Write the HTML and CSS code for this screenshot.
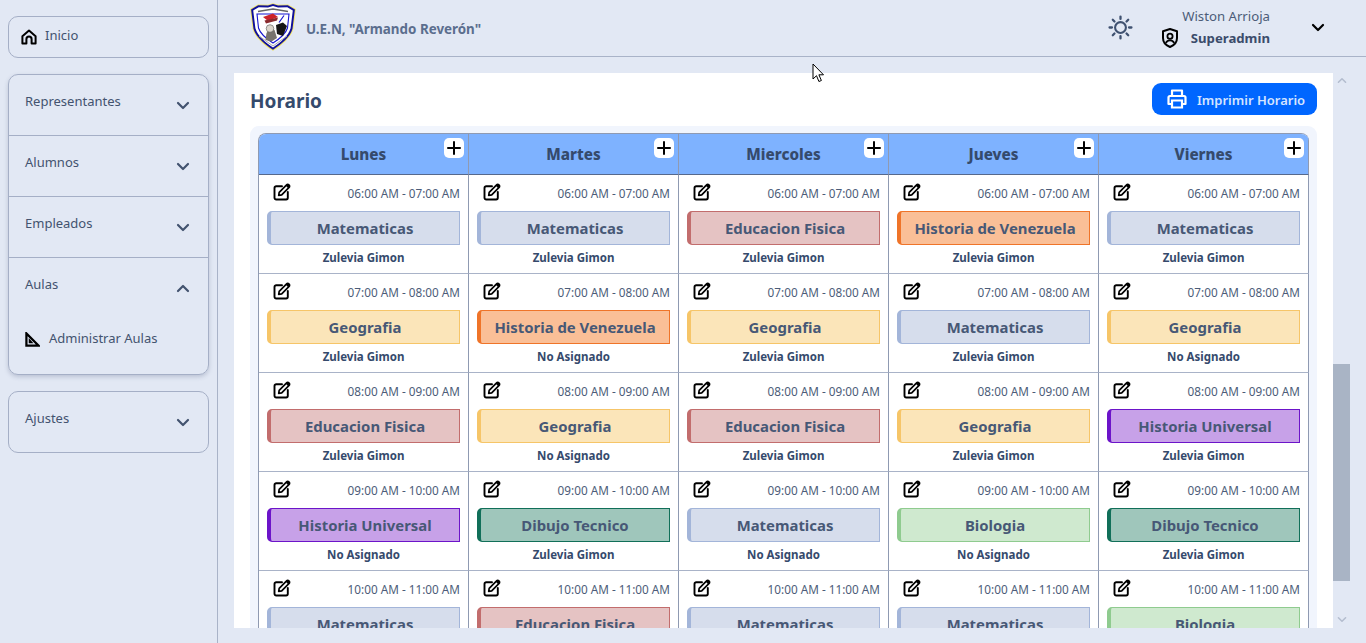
FILE: index.html
```html
<!DOCTYPE html>
<html lang="es">
<head>
<meta charset="utf-8">
<title>Horario</title>
<link rel="stylesheet" href="styles.css">
</head>
<body>
<svg class="defs" width="0" height="0" aria-hidden="true">
  <symbol id="edit" viewBox="0 0 18 18"><path d="M9 3.200H3.200A1.700 1.700 0 0 0 1.500 4.900v9.900a1.700 1.700 0 0 0 1.700 1.700h9.900a1.700 1.700 0 0 0 1.700-1.700V9" fill="none" stroke="#000" stroke-width="1.900" stroke-linecap="round"/><path d="M6.200 9.300 13.600 1.900a1.500 1.500 0 0 1 2.200 0l.3.3a1.500 1.500 0 0 1 0 2.200L8.700 11.800l-3 .5z" fill="none" stroke="#000" stroke-width="1.700" stroke-linejoin="round"/><path d="M12.800 2.800 15.200 5.200 16.400 4a1.600 1.600 0 0 0-2.300-2.300z" fill="#000"/></symbol>
  <symbol id="plus" viewBox="0 0 20 20"><path d="M10 4v12M4 10h12" stroke="#000" stroke-width="2" stroke-linecap="round" fill="none"/></symbol>
  <symbol id="chev" viewBox="0 0 14 9"><path d="M2 2l5 5 5-5" fill="none" stroke="currentColor" stroke-width="2.200" stroke-linecap="round" stroke-linejoin="round"/></symbol>
</svg>
<div class="app">
  <aside class="side">
    <a class="card home"><svg class="ic-home" viewBox="0 0 16 16"><path d="M1.400 7.200 8 1.600l6.600 5.600V14.600H10.600V10.200a2.600 2.600 0 0 0-5.200 0v4.400H1.400z" fill="none" stroke="#000" stroke-width="2" stroke-linejoin="round"/></svg><span>Inicio</span></a>
    <div class="card group lifted">
      <div class="acc"><span>Representantes</span><svg class="chev"><use href="#chev"/></svg></div>
      <div class="acc"><span>Alumnos</span><svg class="chev"><use href="#chev"/></svg></div>
      <div class="acc"><span>Empleados</span><svg class="chev"><use href="#chev"/></svg></div>
      <div class="acc open"><span>Aulas</span><svg class="chev up"><use href="#chev"/></svg></div>
      <div class="sub"><svg class="ic-sq" viewBox="0 0 16 16"><path d="M1.500 1.500v13h13z" fill="none" stroke="#000" stroke-width="2.400" stroke-linejoin="miter"/><path d="M4 6.500 9 12H4z" fill="#000"/></svg><span>Administrar Aulas</span></div>
    </div>
    <div class="card group solo"><div class="acc"><span>Ajustes</span><svg class="chev"><use href="#chev"/></svg></div></div>
  </aside>
  <div class="right">
    <header class="top">
      <svg class="logo" viewBox="0 0 46 48">
        <path d="M23 .2 28 1.800 38 1.500 45.800 6 43.300 26C41 34.500 32 42 23 47.800 14 42 5 34.500 2.700 26L.2 6 8 1.500 18 1.800z" fill="#f0e25c"/>
        <path d="M23 1 28 2.600 37.800 2.300 44.900 6.400 42.500 25.800C40.300 34 31.500 41.200 23 46.800 14.500 41.200 5.700 34 3.500 25.800L1.100 6.400 8.200 2.300 18 2.600z" fill="#10109c"/>
        <path d="M23 3 28 4.600 37.300 4.300 42.800 7.500 40.600 25.300C38.500 32.800 30.500 39.500 23 44.500 15.500 39.500 7.500 32.800 5.400 25.300L3.200 7.500 8.700 4.300 18 4.600z" fill="#fff"/>
        <path d="M8 8.500 23 6 38 8.500" fill="none" stroke="#666" stroke-width="1.400"/>
        <path d="M7 11 39 11 37.500 25C35.500 31.500 28.500 36.500 23 40 17.500 36.500 10.500 31.500 8.500 25z" fill="#fff" stroke="#1414d0" stroke-width="1.100"/>
        <path d="M13 14 23 10.500 28 14 18 18z" fill="#cc2229"/><path d="M14.500 17.500 28 14.500 27 17.500 16 20.500z" fill="#8a2a2d"/>
        <path d="M26 22 33 19.500 37 23 33 33 27 31z" fill="#161616"/>
        <path d="M15.500 37 16.500 30 20 25 24.500 27 27 35 21.500 38.500z" fill="#77736d"/><circle cx="20" cy="25.500" r="3.800" fill="#dcd6cc" stroke="#555" stroke-width=".6"/>
        <path d="M34 12.500 29 19.500" stroke="#1414d0" stroke-width="1.200"/>
        <path d="M9 33 23 43 37 33" fill="none" stroke="#aaa" stroke-width="1"/>
      </svg>
      <strong class="school">U.E.N, "Armando Reverón"</strong>
      <svg class="sun" viewBox="0 0 24 24"><circle cx="12" cy="12" r="5.200" fill="none" stroke="#3f5170" stroke-width="2"/><path d="M12 1.500v2.300M12 20.200v2.300M1.500 12h2.300M20.200 12h2.300M4.600 4.600l1.600 1.600M17.800 17.800l1.600 1.600M4.600 19.400l1.600-1.600M17.800 6.200l1.600-1.600" stroke="#3f5170" stroke-width="2.200" stroke-linecap="round"/></svg>
      <div class="user">
        <span class="uname">Wiston Arrioja</span>
        <div class="urole"><svg class="shield" viewBox="0 0 16 20"><path d="M8 1 15 3.200V10c0 4.500-3.200 7.500-7 9-3.800-1.500-7-4.500-7-9V3.200z" fill="none" stroke="#000" stroke-width="2" stroke-linejoin="round"/><circle cx="8" cy="8.200" r="2.600" fill="none" stroke="#000" stroke-width="1.800"/><path d="M3.800 15c1-2 2.600-2.600 4.200-2.600s3.200.6 4.200 2.600" fill="none" stroke="#000" stroke-width="1.800"/></svg><strong>Superadmin</strong></div>
      </div>
      <svg class="chev dark"><use href="#chev"/></svg>
    </header>
    <div class="body">
      <main class="panel">
        <div class="title-row">
          <h1>Horario</h1>
          <button class="print"><svg class="ic-print" viewBox="0 0 20 20"><path d="M5 7V1.500h10V7M5 15H1.500V8.500A1.500 1.500 0 0 1 3 7h14a1.500 1.500 0 0 1 1.500 1.500V15H15" fill="none" stroke="#fff" stroke-width="2.200" stroke-linejoin="round"/><path d="M5 11.500h10v7H5z" fill="none" stroke="#fff" stroke-width="2.200"/></svg><span>Imprimir Horario</span></button>
        </div>
        <div class="wrap">
          <div class="grid">
            <div class="th">Lunes<span class="add"><svg><use href="#plus"/></svg></span></div>
            <div class="th">Martes<span class="add"><svg><use href="#plus"/></svg></span></div>
            <div class="th">Miercoles<span class="add"><svg><use href="#plus"/></svg></span></div>
            <div class="th">Jueves<span class="add"><svg><use href="#plus"/></svg></span></div>
            <div class="th">Viernes<span class="add"><svg><use href="#plus"/></svg></span></div>

            <div class="td"><div class="tm"><svg class="ed"><use href="#edit"/></svg><span>06:00 AM - 07:00 AM</span></div><div class="sj mat">Matematicas</div><div class="tc">Zulevia Gimon</div></div>
            <div class="td"><div class="tm"><svg class="ed"><use href="#edit"/></svg><span>06:00 AM - 07:00 AM</span></div><div class="sj mat">Matematicas</div><div class="tc">Zulevia Gimon</div></div>
            <div class="td"><div class="tm"><svg class="ed"><use href="#edit"/></svg><span>06:00 AM - 07:00 AM</span></div><div class="sj edf">Educacion Fisica</div><div class="tc">Zulevia Gimon</div></div>
            <div class="td"><div class="tm"><svg class="ed"><use href="#edit"/></svg><span>06:00 AM - 07:00 AM</span></div><div class="sj hve">Historia de Venezuela</div><div class="tc">Zulevia Gimon</div></div>
            <div class="td"><div class="tm"><svg class="ed"><use href="#edit"/></svg><span>06:00 AM - 07:00 AM</span></div><div class="sj mat">Matematicas</div><div class="tc">Zulevia Gimon</div></div>

            <div class="td"><div class="tm"><svg class="ed"><use href="#edit"/></svg><span>07:00 AM - 08:00 AM</span></div><div class="sj geo">Geografia</div><div class="tc">Zulevia Gimon</div></div>
            <div class="td"><div class="tm"><svg class="ed"><use href="#edit"/></svg><span>07:00 AM - 08:00 AM</span></div><div class="sj hve">Historia de Venezuela</div><div class="tc">No Asignado</div></div>
            <div class="td"><div class="tm"><svg class="ed"><use href="#edit"/></svg><span>07:00 AM - 08:00 AM</span></div><div class="sj geo">Geografia</div><div class="tc">Zulevia Gimon</div></div>
            <div class="td"><div class="tm"><svg class="ed"><use href="#edit"/></svg><span>07:00 AM - 08:00 AM</span></div><div class="sj mat">Matematicas</div><div class="tc">Zulevia Gimon</div></div>
            <div class="td"><div class="tm"><svg class="ed"><use href="#edit"/></svg><span>07:00 AM - 08:00 AM</span></div><div class="sj geo">Geografia</div><div class="tc">No Asignado</div></div>

            <div class="td"><div class="tm"><svg class="ed"><use href="#edit"/></svg><span>08:00 AM - 09:00 AM</span></div><div class="sj edf">Educacion Fisica</div><div class="tc">Zulevia Gimon</div></div>
            <div class="td"><div class="tm"><svg class="ed"><use href="#edit"/></svg><span>08:00 AM - 09:00 AM</span></div><div class="sj geo">Geografia</div><div class="tc">No Asignado</div></div>
            <div class="td"><div class="tm"><svg class="ed"><use href="#edit"/></svg><span>08:00 AM - 09:00 AM</span></div><div class="sj edf">Educacion Fisica</div><div class="tc">Zulevia Gimon</div></div>
            <div class="td"><div class="tm"><svg class="ed"><use href="#edit"/></svg><span>08:00 AM - 09:00 AM</span></div><div class="sj geo">Geografia</div><div class="tc">Zulevia Gimon</div></div>
            <div class="td"><div class="tm"><svg class="ed"><use href="#edit"/></svg><span>08:00 AM - 09:00 AM</span></div><div class="sj hun">Historia Universal</div><div class="tc">Zulevia Gimon</div></div>

            <div class="td"><div class="tm"><svg class="ed"><use href="#edit"/></svg><span>09:00 AM - 10:00 AM</span></div><div class="sj hun">Historia Universal</div><div class="tc">No Asignado</div></div>
            <div class="td"><div class="tm"><svg class="ed"><use href="#edit"/></svg><span>09:00 AM - 10:00 AM</span></div><div class="sj dib">Dibujo Tecnico</div><div class="tc">Zulevia Gimon</div></div>
            <div class="td"><div class="tm"><svg class="ed"><use href="#edit"/></svg><span>09:00 AM - 10:00 AM</span></div><div class="sj mat">Matematicas</div><div class="tc">No Asignado</div></div>
            <div class="td"><div class="tm"><svg class="ed"><use href="#edit"/></svg><span>09:00 AM - 10:00 AM</span></div><div class="sj bio">Biologia</div><div class="tc">No Asignado</div></div>
            <div class="td"><div class="tm"><svg class="ed"><use href="#edit"/></svg><span>09:00 AM - 10:00 AM</span></div><div class="sj dib">Dibujo Tecnico</div><div class="tc">Zulevia Gimon</div></div>

            <div class="td"><div class="tm"><svg class="ed"><use href="#edit"/></svg><span>10:00 AM - 11:00 AM</span></div><div class="sj mat">Matematicas</div><div class="tc">Zulevia Gimon</div></div>
            <div class="td"><div class="tm"><svg class="ed"><use href="#edit"/></svg><span>10:00 AM - 11:00 AM</span></div><div class="sj edf">Educacion Fisica</div><div class="tc">Zulevia Gimon</div></div>
            <div class="td"><div class="tm"><svg class="ed"><use href="#edit"/></svg><span>10:00 AM - 11:00 AM</span></div><div class="sj mat">Matematicas</div><div class="tc">Zulevia Gimon</div></div>
            <div class="td"><div class="tm"><svg class="ed"><use href="#edit"/></svg><span>10:00 AM - 11:00 AM</span></div><div class="sj mat">Matematicas</div><div class="tc">Zulevia Gimon</div></div>
            <div class="td"><div class="tm"><svg class="ed"><use href="#edit"/></svg><span>10:00 AM - 11:00 AM</span></div><div class="sj bio">Biologia</div><div class="tc">Zulevia Gimon</div></div>
          </div>
        </div>
      </main>
      <div class="bar">
        <svg class="arrow"><use href="#chev"/></svg>
        <div class="thumb"></div>
        <svg class="arrow down"><use href="#chev"/></svg>
      </div>
    </div>
  </div>
</div>
<svg class="cursor" viewBox="0 0 13 20"><path d="M1 1v15l3.500-3.300 2.400 5.800 2.500-1-2.500-5.700H11.500z" fill="#fff" stroke="#000" stroke-width="1"/></svg>
</body>
</html>
```
FILE: styles.css
```css
* { box-sizing: border-box; }
html, body { margin: 0; height: 100%; overflow: hidden; }
body { font-family: "Noto Sans", "Open Sans", sans-serif; font-size: 13px; color: #43536f; background: #e2e8f4; }
.defs { position: absolute; }
.app { display: flex; height: 643px; }

.side { width: 218px; flex: none; border-right: 1px solid #a9b3c8; padding: 16px 8px 0; display: flex; flex-direction: column; gap: 16px; }
.card { width: 201px; border: 1px solid #a5afc6; border-radius: 10px; }
.home { height: 42px; display: flex; align-items: flex-start; gap: 8px; padding: 10px 0 0 12px; line-height: 17px; }
.ic-home { width: 16px; height: 16px; margin-top: 2px; flex: none; }
.group { display: flex; flex-direction: column; }
.lifted { box-shadow: 0 2px 4px rgba(70, 85, 120, .25); }
.acc { height: 61px; display: flex; justify-content: space-between; padding: 17px 18px 0 16px; line-height: 19px; border-bottom: 1px solid #a5afc6; }
.group > .acc:last-child { border-bottom: 0; }
.solo { height: 62px; }
.solo .acc { height: 60px; }
.open { border-bottom: 0; }
.chev { width: 14px; height: 9px; margin-top: 9px; color: #43536f; flex: none; }
.up { transform: rotate(180deg); }
.sub { height: 55px; display: flex; align-items: flex-start; gap: 9px; padding: 10px 0 0 16px; line-height: 18px; }
.ic-sq { width: 15px; height: 15px; margin-top: 3px; flex: none; }

.right { flex: 1; min-width: 0; display: flex; flex-direction: column; }
.top { height: 57px; flex: none; display: flex; align-items: center; padding: 0 41px 2px 32px; border-bottom: 1px solid #a9b3c8; }
.logo { width: 46px; height: 48px; flex: none; }
.school { margin-left: 10px; color: #5b6e8e; font-weight: 700; font-size: 13.400px; padding-top: 3px; }
.sun { width: 25px; height: 25px; margin-left: auto; flex: none; }
.user { width: 108px; margin-left: 29px; display: flex; flex-direction: column; align-items: flex-end; line-height: 20px; }
.uname { color: #4c5c78; font-size: 13.200px; }
.urole { display: flex; align-items: center; width: 108px; justify-content: space-between; margin-top: 2px; }
.urole strong { color: #3b4c6b; font-weight: 700; font-size: 13.200px; }
.shield { width: 16px; height: 20px; }
.chev.dark { color: #000; margin: 0 0 0 41px; }

.body { flex: 1; min-height: 0; display: flex; padding: 16px 16px 15px; }
.panel { width: 1099px; flex: none; background: #fff; overflow: hidden; padding: 10px 16px 0; }
.title-row { display: flex; justify-content: space-between; height: 43px; }
h1 { margin: 0; font-size: 19px; line-height: 36px; font-weight: 700; color: #354a6c; }
.print { width: 165px; height: 32px; border: 0; border-radius: 9px; background: #0066ff; color: #d5e4ff; font: 600 13px "Noto Sans", sans-serif; display: flex; align-items: center; gap: 10px; padding: 2px 0 0 15px; }
.ic-print { width: 20px; height: 20px; flex: none; margin-top: -2px; }

.wrap { background: #f1f5fd; border-radius: 9px; padding: 7px 8px 0; }
.grid { display: grid; grid-template-columns: repeat(5, 210px); border-left: 1px solid #8f9ab2; border-top: 1px solid #8f9ab2; border-top-left-radius: 8px; border-top-right-radius: 8px; overflow: hidden; width: 1051px; }
.th { height: 41px; background: #7eb2ff; border-right: 1px solid #8f9ab2; border-bottom: 1px solid #56698c; display: flex; align-items: center; justify-content: center; padding-bottom: 1px; font-size: 15.200px; font-weight: 800; color: #354a6c; position: relative; }
.add { position: absolute; top: 4px; right: 4px; width: 20px; height: 20px; background: #fff; border-radius: 5px; }
.add svg { display: block; width: 20px; height: 20px; }
.td { height: 99px; background: #fff; border-right: 1px solid #8f9ab2; border-bottom: 1px solid #a9b3c8; padding: 9px 8px 0; }
.tm { display: flex; justify-content: space-between; align-items: center; height: 19px; padding-left: 6px; font-size: 11.750px; color: #4c5c78; margin-bottom: 8px; }
.tm span { margin-bottom: 2px; }
.ed { width: 18px; height: 18px; display: block; margin-top: -4px; }
.sj { height: 34px; border: 1px solid; border-left-width: 4px; border-radius: 5px 0 0 5px; display: flex; align-items: center; justify-content: center; font-size: 14.900px; font-weight: 700; color: #475876; }
.tc { text-align: center; font-size: 11.500px; font-weight: 700; color: #354a6c; margin-top: 5px; line-height: 16px; }
.mat { background: #d6ddec; border-color: #a3b5d9; }
.geo { background: #fbe5b9; border-color: #f6c568; }
.edf { background: #e5c3c3; border-color: #c26d6d; }
.hve { background: #fabf97; border-color: #ef7429; }
.hun { background: #c7a1e8; border-color: #6c14c9; }
.dib { background: #9fc6bb; border-color: #116f59; }
.bio { background: #cfe9cf; border-color: #8fcb8f; }

.bar { width: 17px; flex: none; display: flex; flex-direction: column; align-items: center; }
.arrow { width: 10px; height: 7px; margin-top: 4px; color: #b4bdcf; transform: rotate(180deg); flex: none; }
.arrow.down { transform: none; margin-top: 35px; }
.thumb { width: 17px; height: 217px; margin-top: 280px; background: #a9b4c5; flex: none; }

.cursor { position: absolute; left: 812px; top: 63px; width: 13px; height: 20px; }
```
